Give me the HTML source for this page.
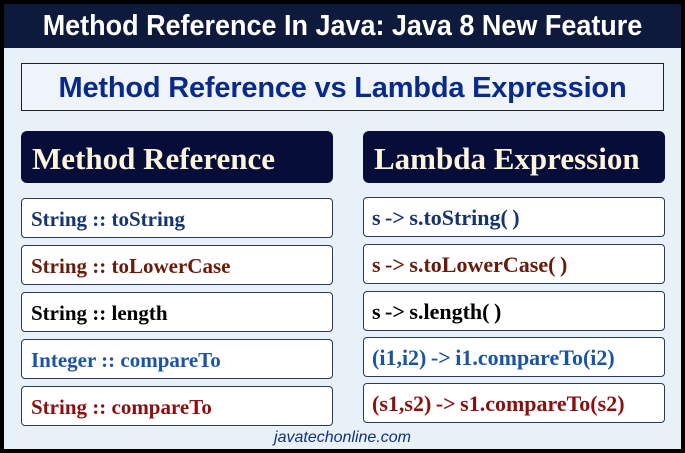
<!DOCTYPE html>
<html><head><style>
html,body{margin:0;padding:0}
body{width:685px;height:453px;position:relative;overflow:hidden;background:#fff;font-family:"Liberation Serif",serif}
.frame{position:absolute;left:0;top:0;width:677px;height:445px;border:4px solid #000;background:#e8f0f8}
.top{position:absolute;left:0;top:0;width:677px;height:44px;background:#0e1a3c;}
.top span{position:absolute;left:0;width:677px;text-align:center;color:#fff;font-family:"Liberation Sans",sans-serif;font-weight:bold;font-size:29px;line-height:44px;transform:scaleX(0.93);transform-origin:center}
.sub{position:absolute;left:17px;top:59px;width:641px;height:46px;border:1px solid #222;background:#eef4fa;color:#0a2a8a;font-family:"Liberation Sans",sans-serif;font-weight:bold;font-size:29px;line-height:48px;text-align:center;letter-spacing:-0.2px}
.hd{position:absolute;top:127px;height:52px;background:#050d38;border-radius:6px;color:#fbf3da;font-weight:bold;font-size:31px;line-height:56px;padding-left:11px;box-sizing:border-box}
.c{position:absolute;height:40px;background:#fff;border:1px solid #2a3a5a;border-radius:4px;box-sizing:border-box;font-weight:bold;font-size:21px;line-height:40px;padding-left:9px;white-space:nowrap}
.rc{font-size:22px;padding-left:8px;word-spacing:-1px}
.b{color:#16336f}.r{color:#6a1a0a}.k{color:#000}.l{color:#1a55a5}.d{color:#8a1010}
.foot{position:absolute;left:0;width:677px;top:425px;text-align:center;font-family:"Liberation Sans",sans-serif;font-style:italic;font-size:16px;color:#13307a}
</style></head><body>
<div class="frame">
<div class="top"><span>Method Reference In Java: Java 8 New Feature</span></div>
<div class="sub">Method Reference vs Lambda Expression</div>
<div class="hd" style="left:17px;width:312px">Method Reference</div>
<div class="hd" style="left:359px;width:302px">Lambda Expression</div>

<div class="c b" style="left:17px;top:194px;width:312px">String :: toString</div>
<div class="c r" style="left:17px;top:241px;width:312px">String :: toLowerCase</div>
<div class="c k" style="left:17px;top:288px;width:312px">String :: length</div>
<div class="c l" style="left:17px;top:335px;width:312px">Integer :: compareTo</div>
<div class="c d" style="left:17px;top:382px;width:312px">String :: compareTo</div>

<div class="c rc b" style="left:359px;top:193px;width:302px">s -&gt; s.toString( )</div>
<div class="c rc r" style="left:359px;top:240px;width:302px">s -&gt; s.toLowerCase( )</div>
<div class="c rc k" style="left:359px;top:287px;width:302px">s -&gt; s.length( )</div>
<div class="c rc l" style="left:359px;top:333px;width:302px">(i1,i2) -&gt; i1.compareTo(i2)</div>
<div class="c rc d" style="left:359px;top:379px;width:302px">(s1,s2) -&gt; s1.compareTo(s2)</div>
<div class="foot">javatechonline.com</div>
</div>
</body></html>
